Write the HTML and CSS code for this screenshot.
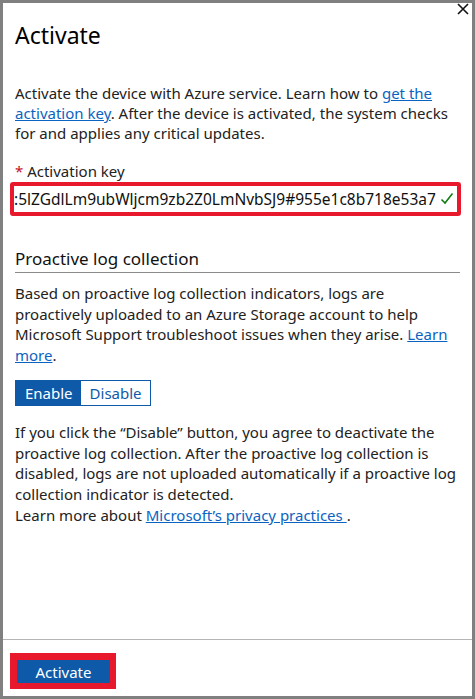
FILE: index.html
```html
<!DOCTYPE html>
<html>
<head>
<meta charset="utf-8">
<link rel="stylesheet" href="styles.css">
</head>
<body>
<div class="panel">
  <svg class="close" width="12" height="12" viewBox="0 0 12 12"><path d="M1 1L11 11M11 1L1 11" stroke="#111" stroke-width="1.6"/></svg>
  <div class="content">
    <h1 class="title">Activate</h1>
    <p class="text intro">Activate the device with Azure service. Learn how to <a href="#" class="link">get the activation key</a>. After the device is activated, the system checks for and applies any critical updates.</p>
    <div class="label"><span class="req">*</span> Activation key</div>
    <div class="key-mark">
      <div class="key-input">
        <span class="key-value">:5lZGdlLm9ubWljcm9zb2Z0LmNvbSJ9#955e1c8b718e53a7</span>
        <svg class="check" width="14" height="14" viewBox="0 0 14 14"><path d="M1.5 7.5L5 11L12.5 1.5" fill="none" stroke="#107c10" stroke-width="1.6"/></svg>
      </div>
    </div>
    <h2 class="section">Proactive log collection</h2>
    <p class="text">Based on proactive log collection indicators, logs are proactively uploaded to an Azure Storage account to help Microsoft Support troubleshoot issues when they arise. <a href="#" class="link">Learn more</a>.</p>
    <div class="toggle">
      <span class="opt on">Enable</span>
      <span class="opt">Disable</span>
    </div>
    <p class="text">If you click the “Disable” button, you agree to deactivate the proactive log collection. After the proactive log collection is disabled, logs are not uploaded automatically if a proactive log collection indicator is detected.<br>Learn more about <a href="#" class="link">Microsoft’s privacy practices </a>.</p>
  </div>
  <div class="footer">
    <div class="btn-mark"><button class="primary">Activate</button></div>
  </div>
</div>
</body>
</html>
```
FILE: styles.css
```css
html, body { margin: 0; padding: 0; }
body {
  width: 475px;
  height: 699px;
  font-family: "Noto Sans", "Open Sans", sans-serif;
  color: #1b1b1b;
  background: #fff;
}
.panel {
  position: relative;
  box-sizing: border-box;
  width: 475px;
  height: 699px;
  border: 3px solid #808080;
  display: flex;
  flex-direction: column;
  background: #fff;
}
.close { position: absolute; top: 0; right: 3px; }
.content {
  flex: 1;
  padding: 0 12px 0 12px;
}
.title {
  margin: 16px 0 0 0;
  font-size: 23px;
  font-weight: 400;
  line-height: 32px;
  color: #000;
}
.text {
  margin: 0;
  font-size: 15px;
  line-height: 20.7px;
  color: #222;
}
.text.intro { margin-top: 32px; line-height: 20px; }
.link { color: #0b63c1; text-decoration: underline; }
.label {
  margin-top: 18px;
  font-size: 15px;
  line-height: 20px;
  color: #222;
}
.req { color: #c50f1f; }
.key-mark {
  margin: 1px 0 0 -5px;
  width: 451px;
  box-sizing: border-box;
  border: 4px solid #e8192c;
  border-radius: 3px;
  padding: 0;
}
.key-input {
  display: flex;
  align-items: center;
  justify-content: space-between;
  height: 26px;
  padding: 0 4px 0 0;
  background: #fff;
  overflow: hidden;
}
.key-value { font-size: 15.5px; white-space: nowrap; color: #111; }
.check { flex: none; margin-left: 4px; }
.section {
  margin: 30px 0 0 0;
  font-size: 17px;
  font-weight: 400;
  line-height: 26px;
  color: #111;
  padding-bottom: 0;
  border-bottom: 1px solid #8a8a8a;
}
.section + .text { margin-top: 10px; }
.toggle {
  display: inline-flex;
  margin-top: 14px;
  border: 1px solid #0f5aa8;
  height: 26px;
  box-sizing: border-box;
}
.opt {
  display: flex;
  align-items: center;
  padding: 0 8px 0 9px;
  font-size: 15px;
  color: #0f5aa8;
  background: #fff;
}
.opt.on { background: #0f5aa8; color: #fff; }
.toggle + .text { margin-top: 16px; }
.footer {
  height: 57px;
  border-top: 1px solid #b5b5b5;
  padding: 13px 0 0 7px;
  box-sizing: border-box;
}
.btn-mark {
  display: inline-block;
  background: #e8192c;
  padding: 7px 6px 6px 7px;
}
.primary {
  display: block;
  width: 93px;
  height: 23px;
  border: none;
  background: #0f5aa8;
  color: #fff;
  font-family: "Noto Sans", "Open Sans", sans-serif;
  font-size: 15px;
  padding: 0;
}
```
